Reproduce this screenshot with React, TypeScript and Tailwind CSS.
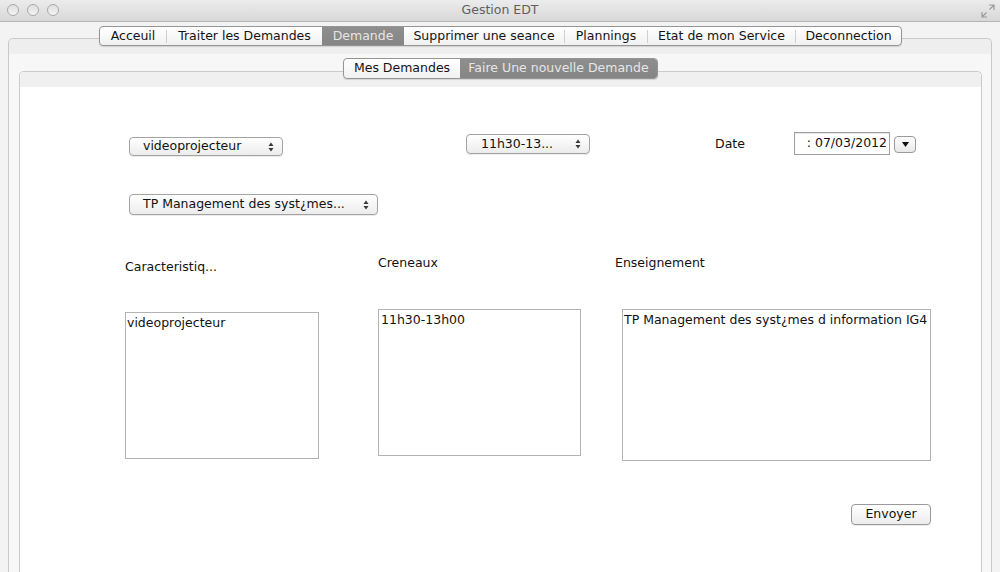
import React from 'react';

const font = { fontFamily: '"DejaVu Sans", "Liberation Sans", sans-serif' };

function Arrows() {
  return (
    <svg width="6" height="10" viewBox="0 0 6 10" className="shrink-0">
      <path d="M3 0.5 L5.5 4 L0.5 4 Z" fill="#3a3a3a" />
      <path d="M3 9.5 L5.5 6 L0.5 6 Z" fill="#3a3a3a" />
    </svg>
  );
}

function Select({ label, className }: { label: string; className: string }) {
  return (
    <div
      className={`flex items-center justify-between rounded-[4px] border border-[#a3a3a3] bg-gradient-to-b from-white to-[#ececec] pr-[8px] shadow-[0_1px_0_rgba(0,0,0,0.08)] text-[12.5px] text-[#111] ${className}`}
    >
      <span className="leading-none">{label}</span>
      <Arrows />
    </div>
  );
}

function TabBar({ tabs, active, className }: { tabs: { label: string; w: string }[]; active: number; className?: string }) {
  return (
    <div className={`relative z-10 flex rounded-[4px] border border-[#959595] bg-gradient-to-b from-white to-[#f1f1f1] shadow-[0_1px_1px_rgba(0,0,0,0.12)] overflow-hidden ${className ?? ''}`}>
      {tabs.map((t, i) => (
        <div key={t.label} className={`flex items-center ${t.w}`}>
          {i > 0 && i !== active && i - 1 !== active && <div className="h-[13px] w-px bg-[#cfcfcf]" />}
          <div
            className={`flex h-full flex-1 items-center justify-center text-[12.5px] ${
              i === active ? 'bg-gradient-to-b from-[#8e8e8e] to-[#858585] text-[#e6e6e6]' : 'text-[#141414]'
            }`}
          >
            {t.label}
          </div>
        </div>
      ))}
    </div>
  );
}

const mainTabs = [
  { label: 'Acceuil', w: 'w-[66px]' },
  { label: 'Traiter les Demandes', w: 'w-[156px]' },
  { label: 'Demande', w: 'w-[82px]' },
  { label: 'Supprimer une seance', w: 'w-[160px]' },
  { label: 'Plannings', w: 'w-[83px]' },
  { label: 'Etat de mon Service', w: 'w-[148px]' },
  { label: 'Deconnection', w: 'w-[106px]' },
];

const subTabs = [
  { label: 'Mes Demandes', w: 'w-[116px]' },
  { label: 'Faire Une nouvelle Demande', w: 'w-[197px]' },
];

export default function App() {
  return (
    <div className="flex h-[572px] w-[1000px] flex-col overflow-hidden bg-[#f3f3f3]" style={font}>
      {/* title bar */}
      <div className="relative flex h-[22px] shrink-0 items-center justify-center border-b border-[#b4b4b4] bg-gradient-to-b from-[#ececec] to-[#d8d8d8]">
        <div className="absolute left-[7px] top-[4px] flex gap-[8px]">
          {[0, 1, 2].map((i) => (
            <div key={i} className="h-[12px] w-[12px] rounded-full border border-[#a9a9a9] bg-gradient-to-b from-[#dedede] to-[#f4f4f4]" />
          ))}
        </div>
        <span className="text-[12.5px] text-[#5f5f5f]">Gestion EDT</span>
        <svg className="absolute right-[5px] top-[4px]" width="14" height="14" viewBox="0 0 14 14">
          <path d="M8 1 H13 V6 M13 1 L8.5 5.5" stroke="#9a9a9a" strokeWidth="1.2" fill="none" />
          <path d="M6 13 H1 V8 M1 13 L5.5 8.5" stroke="#9a9a9a" strokeWidth="1.2" fill="none" />
        </svg>
      </div>

      {/* outer tab pane */}
      <div className="flex flex-1 flex-col pt-[4px]">
        <div className="flex justify-center pl-px">
          <TabBar tabs={mainTabs} active={2} className="h-[20px]" />
        </div>
        <div className="-mt-[8px] ml-[8px] mr-[8px] flex flex-1 flex-col rounded-t-[5px] border border-b-0 border-[#c9c9c9] bg-[#f7f7f7]">
          <div className="h-[15px] bg-[#eeeeee] rounded-t-[5px]" />
          <div className="flex flex-1 flex-col pt-[4px]">
            <div className="flex justify-center pl-[1px]">
              <TabBar tabs={subTabs} active={1} className="h-[21px]" />
            </div>

            {/* inner pane */}
            <div className="-mt-[8px] ml-[10px] mr-[9px] flex flex-1 flex-col rounded-t-[5px] border border-b-0 border-[#cbcbcb] bg-white">
              <div className="h-[15px] rounded-t-[5px] bg-[#f0f0f0]" />
              <div className="flex flex-col pl-[109px] pt-[45px]">
                {/* row 1 */}
                <div className="flex items-start">
                  <Select label="videoprojecteur" className="mt-[5px] h-[19px] w-[154px] pl-[13px]" />
                  <Select label="11h30-13..." className="ml-[183px] mt-[2px] h-[20px] w-[124px] pl-[14px]" />
                  <div className="ml-[125px] mt-[4px] w-[79px] text-[12.5px] leading-[16px] text-[#111]">Date</div>
                  <div className="flex h-[23px] w-[96px] items-center justify-end whitespace-nowrap border border-[#9f9f9f] bg-white pr-[2px] text-[12.5px] text-[#111] shadow-[inset_0_1px_1px_rgba(0,0,0,0.1)]">
                    : 07/03/2012
                  </div>
                  <div className="ml-[4px] mt-[4px] flex h-[17px] w-[22px] items-center justify-center rounded-[4px] border border-[#9a9a9a] bg-gradient-to-b from-white to-[#e8e8e8]">
                    <svg width="7" height="5" viewBox="0 0 7 5">
                      <path d="M0 0 H7 L3.5 5 Z" fill="#111" />
                    </svg>
                  </div>
                </div>

                {/* row 2 */}
                <div className="mt-[38px] flex">
                  <Select label="TP Management des syst¿mes..." className="h-[21px] w-[249px] pl-[13px]" />
                </div>

                {/* lists */}
                <div className="-ml-[4px] flex items-start">
                  <div className="flex w-[253px] flex-col pt-[44px]">
                    <div className="text-[12.5px] leading-[16px] text-[#111]">Caracteristiq...</div>
                    <div className="mt-[37px] h-[147px] w-[194px] border border-[#b3b3b3] bg-white pl-[1px] pt-[2px] text-[12.5px] leading-[16px] text-[#111]">
                      videoprojecteur
                    </div>
                  </div>
                  <div className="flex w-[237px] flex-col pt-[40px]">
                    <div className="text-[12.5px] leading-[16px] text-[#111]">Creneaux</div>
                    <div className="mt-[38px] h-[147px] w-[203px] border border-[#b3b3b3] bg-white pl-[2px] pt-[2px] text-[12.5px] leading-[16px] text-[#111]">
                      11h30-13h00
                    </div>
                  </div>
                  <div className="flex flex-col pt-[40px]">
                    <div className="text-[12.5px] leading-[16px] text-[#111]">Enseignement</div>
                    <div className="ml-[7px] mt-[38px] h-[152px] w-[309px] whitespace-nowrap border border-[#b3b3b3] bg-white pl-[1px] pt-[2px] text-[12.5px] leading-[16px] text-[#111]">
                      TP Management des syst¿mes d information IG4
                    </div>
                  </div>
                </div>

                {/* send */}
                <div className="mt-[43px] flex justify-end pr-[50px]">
                  <div className="flex h-[21px] w-[80px] items-center justify-center rounded-[4px] border border-[#9a9a9a] bg-gradient-to-b from-white to-[#ececec] text-[12.5px] text-[#111] shadow-[0_1px_0_rgba(0,0,0,0.08)]">
                    Envoyer
                  </div>
                </div>
              </div>
            </div>
          </div>
        </div>
      </div>
    </div>
  );
}
